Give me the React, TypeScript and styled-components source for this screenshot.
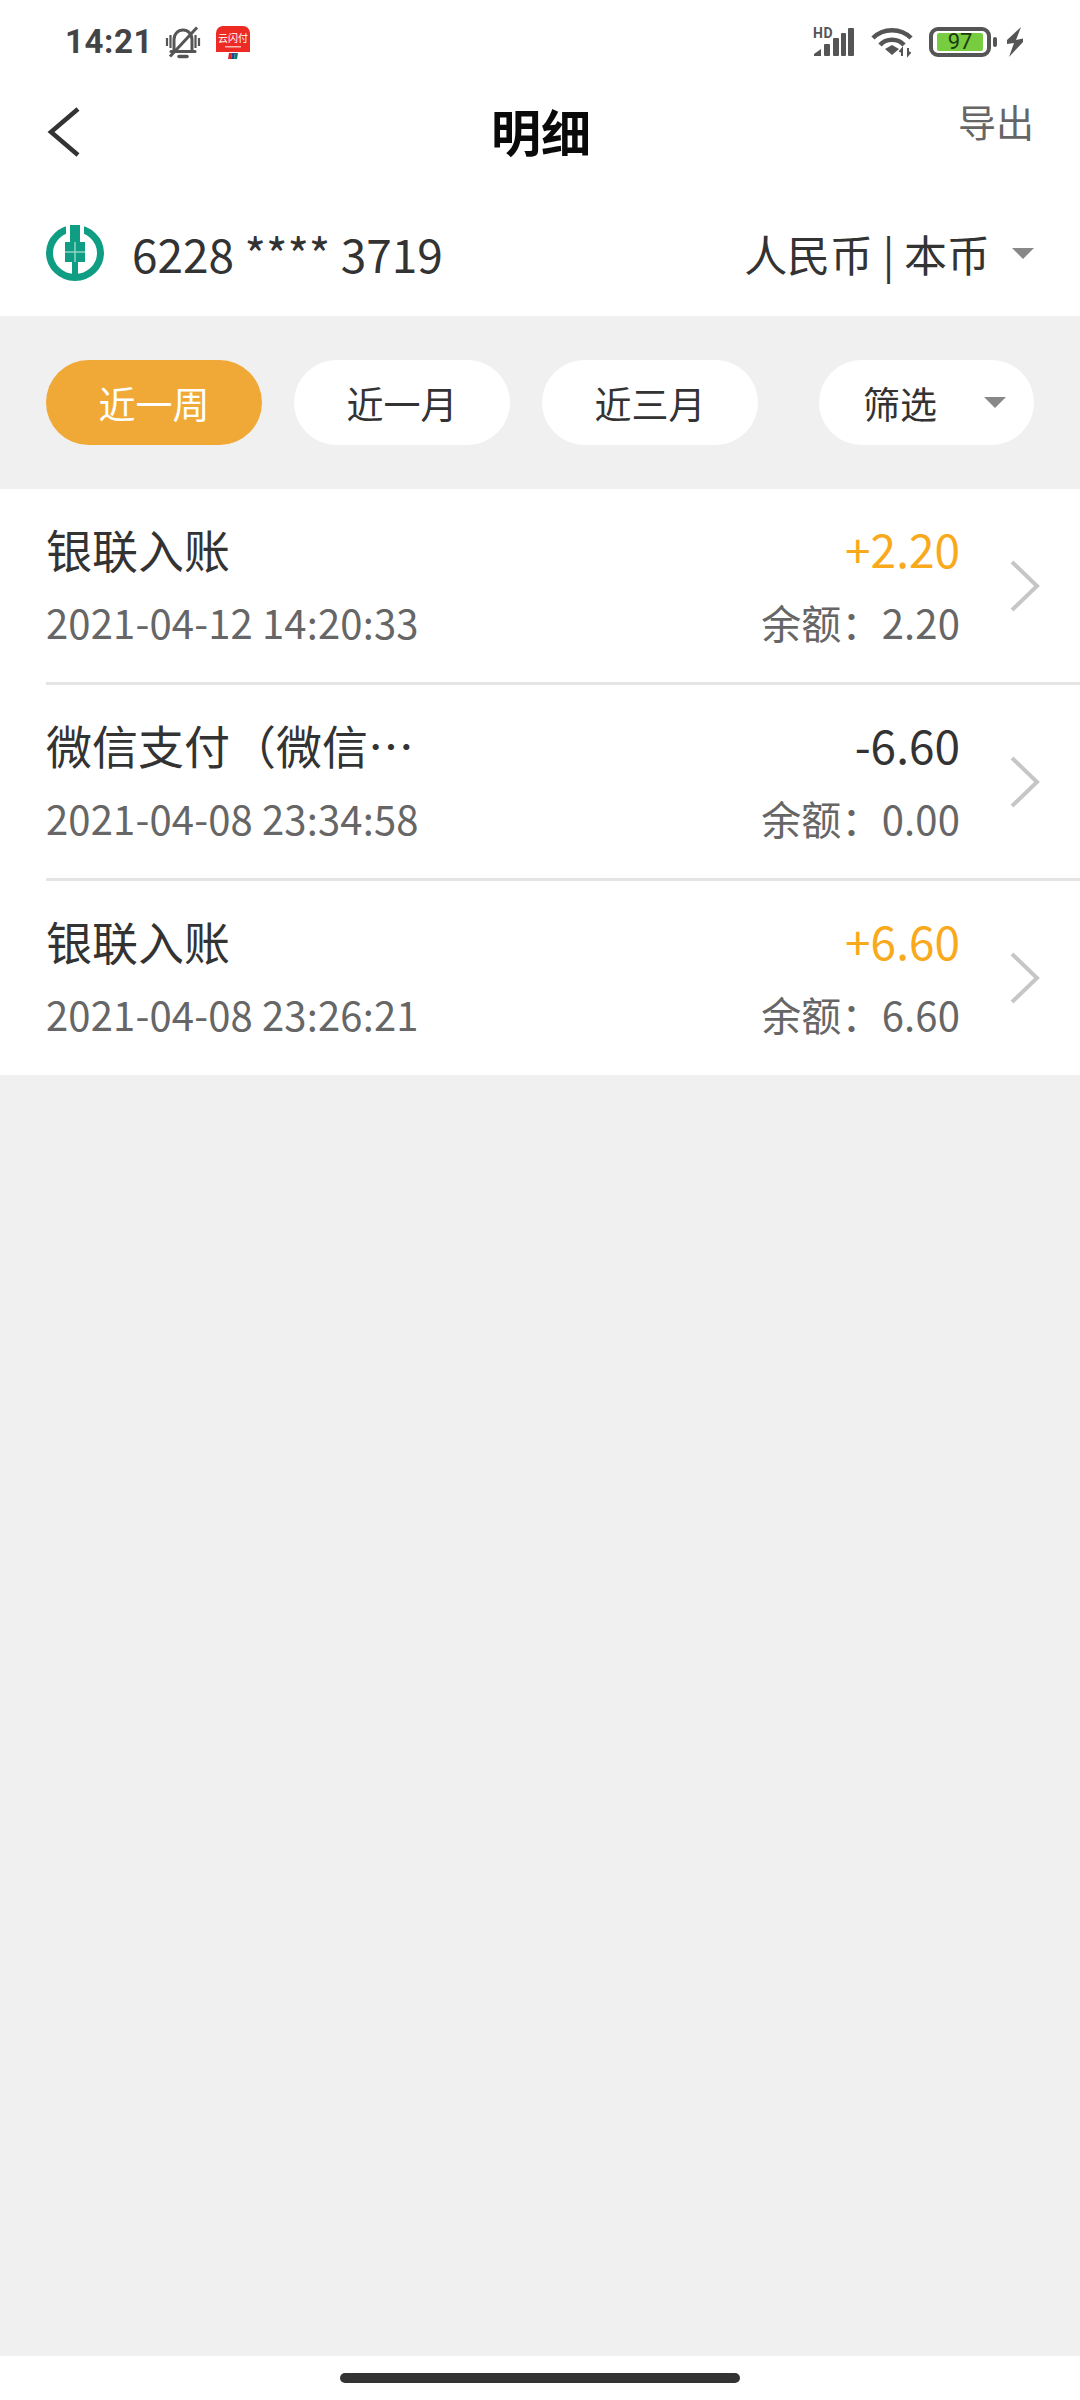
import React from "react"
import styled, { createGlobalStyle } from "styled-components"

const GlobalStyle = createGlobalStyle`
  html, body {
    margin: 0;
    padding: 0;
    background: #f0f0f0;
  }
  * {
    box-sizing: border-box;
  }
`

const Page = styled("div")`
  width: 1080px;
  height: 2400px;
  display: flex;
  flex-direction: column;
  font-family: "Noto Sans CJK SC", "Noto Sans", sans-serif;
  color: #333;
`

const Header = styled("header")`
  background: #fff;
  display: flex;
  flex-direction: column;
`

const StatusBar = styled("div")`
  height: 84px;
  padding: 0 56px 0 65px;
  display: flex;
  align-items: center;
  justify-content: space-between;
`

const StatusGroup = styled("div")`
  display: flex;
  align-items: center;
  gap: 16px;
`

const Time = styled("span")`
  font-family: Roboto, sans-serif;
  font-weight: 700;
  font-size: 33px;
  line-height: 40px;
  letter-spacing: 0.6px;
  color: #444;
  margin-right: -3px;
`

const Icon = styled("svg")`
  display: block;
  flex: none;
  overflow: visible;
`

const Battery = styled("div")`
  width: 62px;
  height: 30px;
  border: 4px solid #555;
  border-radius: 9px;
  padding: 2px 4px;
  margin-right: 2px;
  display: flex;
`

const BatteryFill = styled("div")`
  flex: 1;
  background: #77cc3f;
  border-radius: 2px;
  color: #1d3b10;
  font-family: Roboto, sans-serif;
  font-size: 22px;
  line-height: 18px;
  text-align: center;
`

const BatteryGroup = styled("div")`
  display: flex;
  align-items: center;
  margin-right: -7px;
`

const BatteryNub = styled("div")`
  width: 4px;
  height: 10px;
  background: #555;
  border-radius: 2px;
`

const NavBar = styled("nav")`
  position: relative;
  height: 96px;
  padding: 0 46px;
  display: flex;
  align-items: center;
  justify-content: space-between;
`

const NavTitle = styled("h1")`
  position: absolute;
  left: 2px;
  right: 0;
  top: -2px;
  margin: 0;
  text-align: center;
  font-size: 50px;
  line-height: 96px;
  font-weight: 700;
  color: #0a0a0a;
`

const Export = styled("span")`
  font-size: 38px;
  line-height: 50px;
  color: #666;
  margin-bottom: 22px;
`

const CardRow = styled("div")`
  height: 136px;
  padding: 10px 46px 0;
  display: flex;
  align-items: center;
  justify-content: space-between;
`

const CardInfo = styled("div")`
  display: flex;
  align-items: center;
  gap: 28px;
`

const CardNumber = styled("span")`
  font-size: 46px;
  line-height: 60px;
`

const Currency = styled("div")`
  display: flex;
  align-items: center;
  gap: 22px;
  font-size: 43px;
  line-height: 56px;
`

const Caret = styled("span")<{ $width: number }>`
  width: 0;
  height: 0;
  border-left: ${(p) => p.$width / 2}px solid transparent;
  border-right: ${(p) => p.$width / 2}px solid transparent;
  border-top: ${(p) => p.$width / 2}px solid #888;
`

const Filters = styled("div")`
  padding: 44px 46px;
  display: flex;
  gap: 32px;
`

const Pill = styled("button")<{ $active?: boolean }>`
  width: 216px;
  height: 85px;
  border: 0;
  padding: 0;
  border-radius: 43px;
  background: ${(p) => (p.$active ? "#f0a936" : "#fff")};
  color: ${(p) => (p.$active ? "#fff" : "#333")};
  font-family: inherit;
  font-size: 37px;
`

const FilterPill = styled(Pill)`
  width: 215px;
  margin-left: auto;
  padding: 0 28px 0 44px;
  display: flex;
  align-items: center;
  justify-content: space-between;
`

const List = styled("ul")`
  margin: 0;
  padding: 0 0 0 46px;
  list-style: none;
  background: #fff;
`

const Row = styled("li")<{ $last?: boolean }>`
  height: ${(p) => (p.$last ? 194 : 196)}px;
  padding: 29px 40px 0 0;
  display: flex;
  align-items: flex-start;
  border-bottom: ${(p) => (p.$last ? "0" : "3px solid #e4e4e4")};
`

const RowLeft = styled("div")`
  flex: 1;
  min-width: 0;
`

const RowRight = styled("div")`
  text-align: right;
  margin-right: 50px;
`

const RowTitle = styled("div")`
  font-size: 46px;
  line-height: 60px;
  white-space: nowrap;
`

const Amount = styled("div")<{ $income: boolean }>`
  font-size: 46px;
  line-height: 60px;
  color: ${(p) => (p.$income ? "#f9a91c" : "#333")};
`

const SubText = styled("div")`
  margin-top: 16px;
  font-size: 40px;
  letter-spacing: 0.15px;
  line-height: 56px;
  color: #666;
  white-space: nowrap;
`

const Chevron = styled(Icon)`
  margin-top: 42px;
`

const Main = styled("main")`
  flex: 1;
  background: #f0f0f0;
`

const BottomBar = styled("div")`
  height: 44px;
  background: #fff;
  display: flex;
  justify-content: center;
  padding-top: 17px;
`

const HomeBar = styled("div")`
  width: 400px;
  height: 10px;
  border-radius: 5px;
  background: #333;
`

const BellIcon = () => (
  <Icon width="34" height="33" viewBox="0 0 34 33" fill="none" stroke="#555" strokeWidth="3">
    <path d="M8 25V13.500C8 8 12 4 17 4s9 4 9 9.500V25" />
    <path d="M5 25.500h24" strokeLinecap="round" />
    <path d="M13 30.500h8" strokeWidth="3.500" strokeLinecap="round" />
    <path d="M1 12v8M4.500 9v13M33 12v8M29.500 9v13" strokeWidth="2.200" />
    <path d="M4 30.500 31 1.500" />
  </Icon>
)

const UnionPayIcon = () => (
  <Icon width="34" height="33" viewBox="0 0 34 33">
    <rect width="34" height="33" rx="7" fill="#fff" />
    <path d="M0 7a7 7 0 0 1 7-7h20a7 7 0 0 1 7 7v19H0z" fill="#ee2a24" />
    <text x="17" y="16" fontSize="10" fill="#fff" textAnchor="middle" fontFamily="Noto Sans CJK SC">
      云闪付
    </text>
    <rect x="9" y="20" width="16" height="1.500" fill="#f9b7b4" />
    <path d="M13 27h3l-1 6h-3z" fill="#d8232a" />
    <path d="M16 27h3l-1 6h-3z" fill="#1b4a8f" />
    <path d="M19 27h3l-1 6h-3z" fill="#0c7a6e" />
  </Icon>
)

const AbcLogo = () => (
  <Icon width="58" height="56" viewBox="0 0 58 56">
    <ellipse cx="29" cy="28" rx="25.500" ry="24.500" fill="#fff" stroke="#0f9d83" strokeWidth="7" />
    <rect x="20" y="0" width="18" height="13" fill="#fff" />
    <rect x="24" y="0" width="10" height="18" fill="#0f9d83" />
    <rect x="19" y="17" width="20" height="20" fill="#0f9d83" />
    <path d="M19 27h20M29 17v20" stroke="#8fd3c4" strokeWidth="1.500" />
    <rect x="26" y="37" width="6" height="17" fill="#0f9d83" />
  </Icon>
)

const SignalIcon = () => (
  <Icon width="42" height="30" viewBox="0 0 42 30" fill="#555">
    <text x="0" y="11" fontSize="14" fontWeight="700" fontFamily="Roboto" letterSpacing="0.500">
      HD
    </text>
    <path d="M1 29v-2l7-5v7z" />
    <rect x="11" y="17" width="6" height="12" rx="1" />
    <rect x="20" y="11" width="6" height="18" rx="1" />
    <rect x="28" y="6" width="5" height="23" rx="1" />
    <rect x="35" y="1" width="6" height="28" rx="1" />
  </Icon>
)

const WifiIcon = () => (
  <Icon width="42" height="30" viewBox="0 0 42 30" fill="none" stroke="#555" strokeWidth="4.500">
    <path d="M2 11C12 .500 30 .500 40 11" />
    <path d="M9 18C15 11 27 11 33 18" />
    <path d="M14 22l7-4 7 4-7 6z" fill="#555" stroke="none" />
    <path d="M31 29v-7l-2.500 3M37 21v7l2.500-3" strokeWidth="2" />
  </Icon>
)

const BoltIcon = () => (
  <Icon width="18" height="30" viewBox="0 0 18 30" fill="#555">
    <path d="M15 0 1 13v4l7-1-5 14 14-15v-3.500L10 13z" />
  </Icon>
)

const BackIcon = () => (
  <Icon width="34" height="50" viewBox="0 0 34 50" fill="none" stroke="#333" strokeWidth="4.500">
    <path d="M32 2 5 25l27 23" />
  </Icon>
)

const ChevronIcon = () => (
  <Chevron width="30" height="52" viewBox="0 0 30 52" fill="none" stroke="#c6c6c6" strokeWidth="4">
    <path d="M2 2l25 24L2 50" />
  </Chevron>
)

type Record = {
  title: string
  date: string
  amount: string
  balance: string
}

const records: Record[] = [
  { title: "银联入账", date: "2021-04-12 14:20:33", amount: "+2.20", balance: "2.20" },
  { title: "微信支付（微信…", date: "2021-04-08 23:34:58", amount: "-6.60", balance: "0.00" },
  { title: "银联入账", date: "2021-04-08 23:26:21", amount: "+6.60", balance: "6.60" },
]

const App: React.FC = () => {
  return (
    <Page>
      <GlobalStyle />
      <Header>
        <StatusBar>
          <StatusGroup>
            <Time>14:21</Time>
            <BellIcon />
            <UnionPayIcon />
          </StatusGroup>
          <StatusGroup>
            <SignalIcon />
            <WifiIcon />
            <BatteryGroup>
              <Battery>
                <BatteryFill>97</BatteryFill>
              </Battery>
              <BatteryNub />
            </BatteryGroup>
            <BoltIcon />
          </StatusGroup>
        </StatusBar>
        <NavBar>
          <BackIcon />
          <NavTitle>明细</NavTitle>
          <Export>导出</Export>
        </NavBar>
        <CardRow>
          <CardInfo>
            <AbcLogo />
            <CardNumber>6228 **** 3719</CardNumber>
          </CardInfo>
          <Currency>
            人民币 | 本币
            <Caret $width={22} />
          </Currency>
        </CardRow>
      </Header>
      <Main>
        <Filters>
          <Pill $active>近一周</Pill>
          <Pill>近一月</Pill>
          <Pill>近三月</Pill>
          <FilterPill>
            筛选
            <Caret $width={22} />
          </FilterPill>
        </Filters>
        <List>
          {records.map((r, i) => (
            <Row key={r.date} $last={i === records.length - 1}>
              <RowLeft>
                <RowTitle>{r.title}</RowTitle>
                <SubText>{r.date}</SubText>
              </RowLeft>
              <RowRight>
                <Amount $income={r.amount.startsWith("+")}>{r.amount}</Amount>
                <SubText>余额：{r.balance}</SubText>
              </RowRight>
              <ChevronIcon />
            </Row>
          ))}
        </List>
      </Main>
      <BottomBar>
        <HomeBar />
      </BottomBar>
    </Page>
  )
}

export default App
